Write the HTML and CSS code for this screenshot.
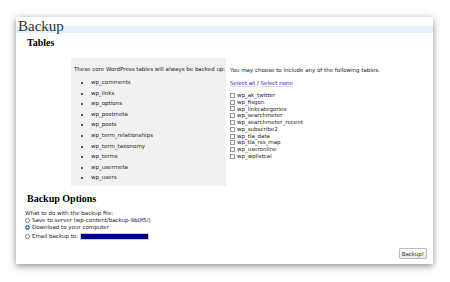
FILE: index.html
```html
<!DOCTYPE html>
<html lang="en">
<head>
  <meta charset="UTF-8">
  <title>Backup</title>
  <link rel="stylesheet" href="styles.css">
</head>
<body>
  <div class="window">
    <h2 class="title">Backup</h2>
    <h3>Tables</h3>
    <div class="tables">
      <div class="core">
        <p>These core WordPress tables will always be backed up:</p>
        <ul>
          <li>wp_comments</li>
          <li>wp_links</li>
          <li>wp_options</li>
          <li>wp_postmeta</li>
          <li>wp_posts</li>
          <li>wp_term_relationships</li>
          <li>wp_term_taxonomy</li>
          <li>wp_terms</li>
          <li>wp_usermeta</li>
          <li>wp_users</li>
        </ul>
      </div>
      <div class="other">
        <p>You may choose to include any of the following tables:</p>
        <p class="select"><a href="#">Select all</a> / <a href="#">Select none</a></p>
        <label><input type="checkbox"> wp_ak_twitter</label>
        <label><input type="checkbox"> wp_fisgon</label>
        <label><input type="checkbox"> wp_linkcategories</label>
        <label><input type="checkbox"> wp_searchmeter</label>
        <label><input type="checkbox"> wp_searchmeter_recent</label>
        <label><input type="checkbox"> wp_subscribe2</label>
        <label><input type="checkbox"> wp_tla_data</label>
        <label><input type="checkbox"> wp_tla_rss_map</label>
        <label><input type="checkbox"> wp_useronline</label>
        <label><input type="checkbox"> wp_wplistcal</label>
      </div>
    </div>
    <h3 class="options-title">Backup Options</h3>
    <div class="options">
      <p>What to do with the backup file:</p>
      <label><input type="radio" name="dest"> Save to server (wp-content/backup-9b0f5/)</label>
      <label><input type="radio" name="dest" checked> Download to your computer</label>
      <label class="email"><input type="radio" name="dest"> Email backup to: <span class="email-box"></span></label>
    </div>
    <div class="submit">
      <button>Backup!</button>
    </div>
  </div>
</body>
</html>
```

FILE: styles.css
```css
body {
  margin: 0;
  padding: 17px 17px 18px 16px;
  background-color: #fff;
  font-family: "DejaVu Sans", sans-serif;
  font-size: 5.5px;
  color: #222;
}
.window {
  width: 417px;
  height: 247px;
  box-sizing: border-box;
  background-color: #fff;
  box-shadow: 0 2px 7px rgba(0, 0, 0, 0.45);
  display: flex;
  flex-direction: column;
}
.title {
  margin: 0;
  padding-left: 2px;
  height: 19px;
  font-family: "Liberation Serif", serif;
  font-size: 15px;
  font-weight: normal;
  line-height: 18px;
  color: #333;
  background: linear-gradient(#e4f2fd, #e4f2fd) no-repeat 0 9px / 100% 7px;
}
h3 {
  margin: 0;
  padding-left: 11px;
  font-family: "Liberation Serif", serif;
  font-size: 10px;
  line-height: 14px;
  color: #000;
}
.tables {
  display: flex;
  gap: 4px;
  margin: 8px 0 0 55px;
}
.core {
  width: 155px;
  height: 128px;
  box-sizing: border-box;
  padding: 7px 3px;
  background-color: #f1f1f1;
  white-space: nowrap;
}
.core p {
  margin: 0 0 4px;
  line-height: 8px;
}
.core ul {
  margin: 0;
  padding-left: 17px;
}
.core li {
  line-height: 10.6px;
}
.other {
  display: flex;
  flex-direction: column;
  padding-top: 8px;
  white-space: nowrap;
}
.other p {
  margin: 0 0 5px;
  line-height: 8px;
}
.select a {
  color: #2a2aa8;
  text-decoration: none;
  border-bottom: 1px solid #d4d4ee;
}
label {
  display: flex;
  align-items: center;
  gap: 2px;
  line-height: 7px;
  height: 6.8px;
}
input {
  margin: 0;
  width: 5px;
  height: 5px;
}
input[type="checkbox"] {
  appearance: none;
  box-sizing: border-box;
  border: 1px solid #999;
  background-color: #fff;
}
input[type="radio"] {
  appearance: none;
  box-sizing: border-box;
  border: 1px solid #888;
  border-radius: 50%;
  background-color: #fff;
}
input[type="radio"]:checked {
  border-color: #2d5fb4;
  background: radial-gradient(circle, #fff 0 0.8px, #3d7fd9 1.2px);
}
.options-title {
  margin-top: 6px;
}
.options {
  margin: 4px 0 0 9px;
  display: flex;
  flex-direction: column;
}
.options p {
  margin: 0;
  line-height: 7px;
}
.email {
  height: 11px;
}
.email-box {
  display: inline-block;
  width: 67px;
  height: 5px;
  background-color: #000080;
  border: 1px solid #ccc;
}
.submit {
  margin-top: auto;
  display: flex;
  justify-content: flex-end;
  padding: 0 6px 5px 0;
}
.submit button {
  font-family: "DejaVu Sans", sans-serif;
  font-size: 5.5px;
  color: #333;
  padding: 0 2px;
  height: 11px;
  background: linear-gradient(#fff, #e9e9e9);
  border: 1px solid #bbb;
  border-radius: 1px;
}
```
